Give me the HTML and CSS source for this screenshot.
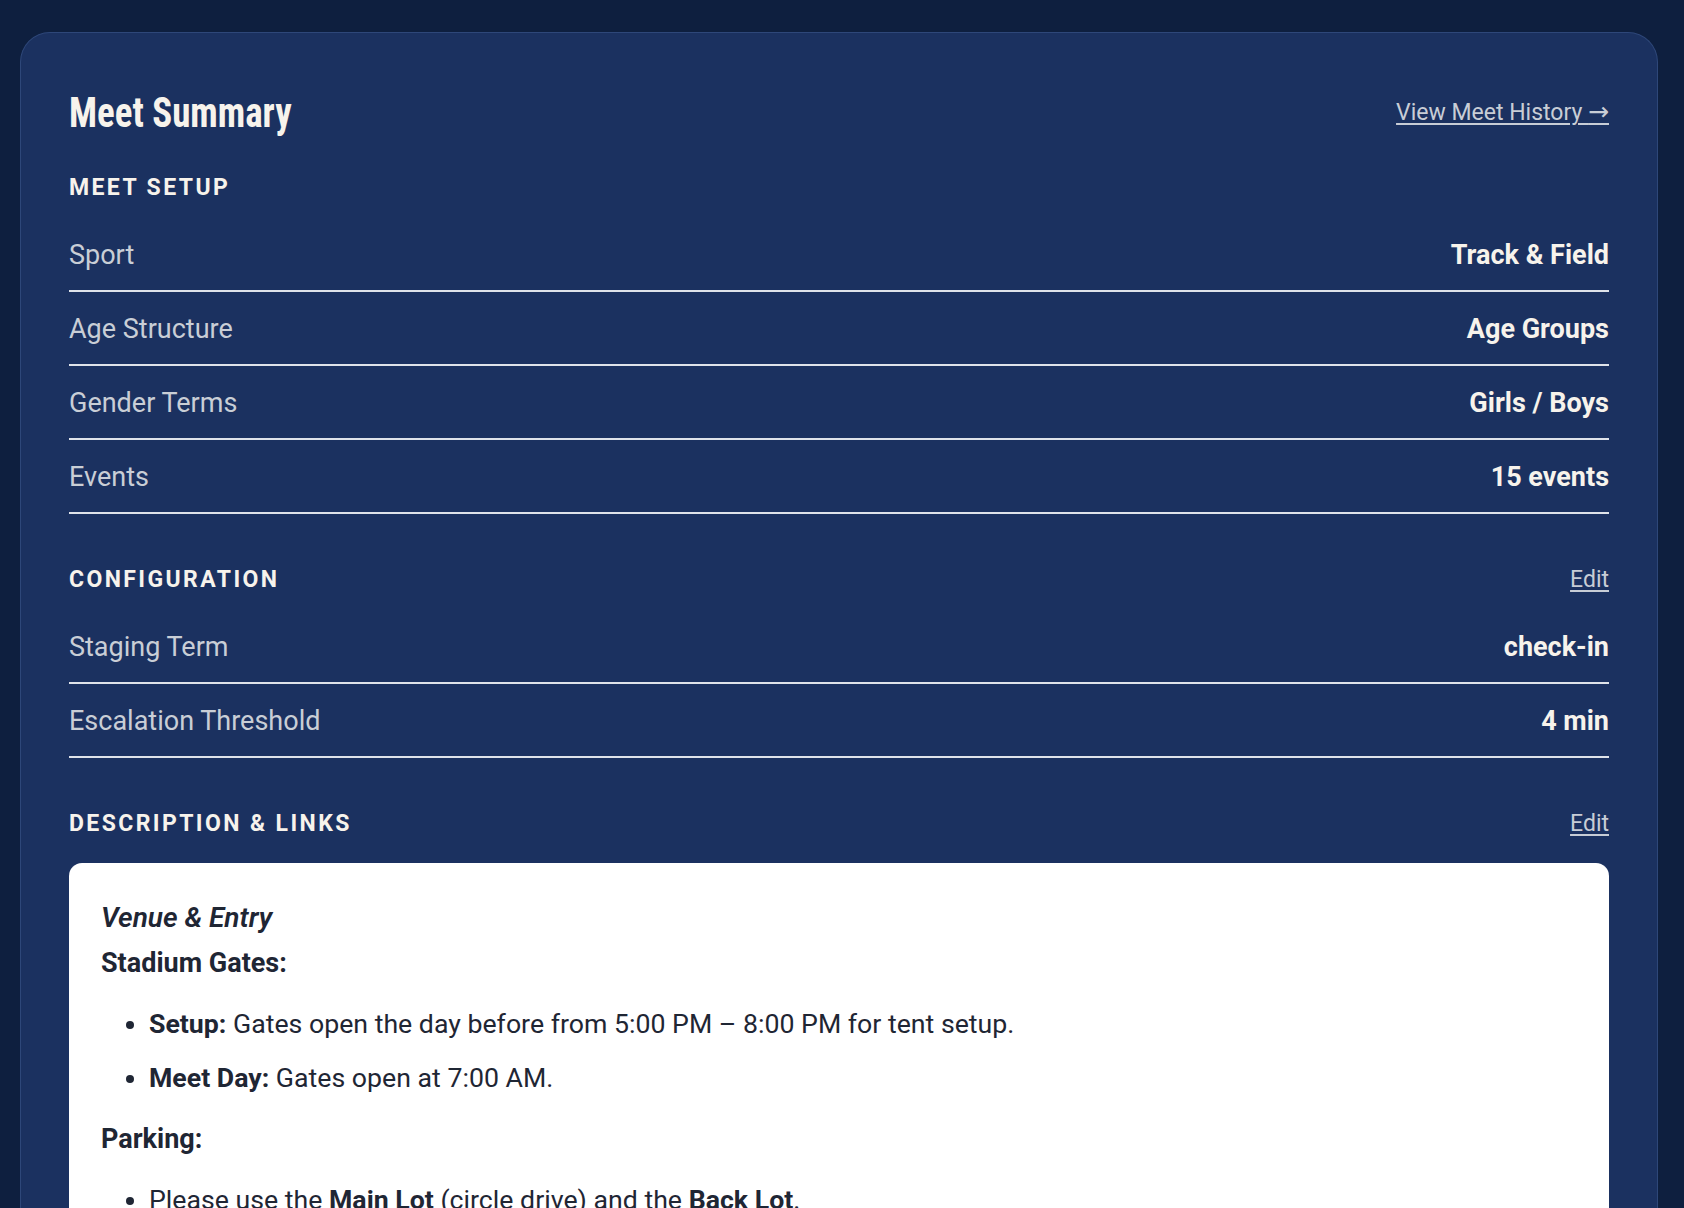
FILE: index.html
```html
<!DOCTYPE html>
<html lang="en">
<head>
<meta charset="utf-8">
<title>Meet Summary</title>
<link rel="stylesheet" href="styles.css">
</head>
<body>
<main class="card">
  <header class="card-header">
    <h1 class="title">Meet Summary</h1>
    <a class="link" href="#">View Meet History <span class="arrow">→</span></a>
  </header>

  <section class="section">
    <div class="section-head">
      <h2 class="section-title">MEET SETUP</h2>
    </div>
    <div class="row"><span class="label">Sport</span><span class="value">Track &amp; Field</span></div>
    <div class="row"><span class="label">Age Structure</span><span class="value">Age Groups</span></div>
    <div class="row"><span class="label">Gender Terms</span><span class="value">Girls / Boys</span></div>
    <div class="row"><span class="label">Events</span><span class="value">15 events</span></div>
  </section>

  <section class="section">
    <div class="section-head">
      <h2 class="section-title">CONFIGURATION</h2>
      <a class="link" href="#">Edit</a>
    </div>
    <div class="row"><span class="label">Staging Term</span><span class="value">check-in</span></div>
    <div class="row"><span class="label">Escalation Threshold</span><span class="value">4 min</span></div>
  </section>

  <section class="section">
    <div class="section-head">
      <h2 class="section-title">DESCRIPTION &amp; LINKS</h2>
      <a class="link" href="#">Edit</a>
    </div>
    <div class="desc">
      <p class="desc-heading">Venue &amp; Entry</p>
      <p class="desc-sub">Stadium Gates:</p>
      <ul class="desc-list">
        <li><strong>Setup:</strong> Gates open the day before from 5:00 PM – 8:00 PM for tent setup.</li>
        <li><strong>Meet Day:</strong> Gates open at 7:00 AM.</li>
      </ul>
      <p class="desc-sub">Parking:</p>
      <ul class="desc-list">
        <li>Please use the <strong>Main Lot</strong> (circle drive) and the <strong>Back Lot</strong>.</li>
      </ul>
    </div>
  </section>
</main>
</body>
</html>
```

FILE: styles.css
```css
* { box-sizing: border-box; }

html, body {
  margin: 0;
  padding: 0;
  height: 100%;
  overflow: hidden;
}

body {
  background: #0e1f3f;
  font-family: Roboto, "Liberation Sans", sans-serif;
  color: #f6f2eb;
}

.card {
  margin: 32px 26px 0 20px;
  min-height: 1300px;
  background: #1b3160;
  border: 1px solid #2e4779;
  border-bottom: none;
  border-radius: 30px 30px 0 0;
  padding: 0 48px;
}

.card-header {
  display: flex;
  justify-content: space-between;
  align-items: center;
  padding-top: 55px;
}

.title {
  margin: 0;
  font-family: "Roboto Condensed", Roboto, sans-serif;
  font-stretch: condensed;
  font-weight: 700;
  font-size: 42px;
  line-height: 50px;
  color: #f7f3ec;
  transform: scaleX(0.88);
  transform-origin: left center;
}

.link {
  font-size: 23px;
  line-height: 28px;
  color: #c8cdd6;
  text-decoration: underline;
  text-decoration-thickness: 2px;
  text-underline-offset: 3px;
}

.arrow {
  font-family: "DejaVu Sans", sans-serif;
  font-size: 25px;
  line-height: 20px;
}

.section {
  margin-top: 36px;
}

.section + .section {
  margin-top: 52px;
}

.section-head {
  display: flex;
  justify-content: space-between;
  align-items: baseline;
  margin-bottom: 16px;
}

.section-title {
  margin: 0;
  font-size: 23px;
  line-height: 28px;
  font-weight: 700;
  letter-spacing: 2.4px;
  color: #f7f3ec;
}

.row {
  display: flex;
  justify-content: space-between;
  align-items: baseline;
  padding: 21px 0 19px;
  border-bottom: 2px solid #dfe3ea;
  font-size: 27px;
  line-height: 32px;
}

.label {
  color: #c9ced6;
}

.value {
  font-weight: 700;
  color: #f7f3ec;
}

.desc {
  margin-top: 25px;
  background: #ffffff;
  border-radius: 13px 13px 0 0;
  padding: 35px 32px 40px;
  color: #1f2634;
  font-size: 26.7px;
  line-height: 40px;
}

.desc p {
  margin: 0;
}

.desc-heading {
  font-style: italic;
  font-weight: 600;
  font-size: 28px;
}

.desc-sub {
  font-weight: 700;
  font-size: 27px;
  margin-top: 5px !important;
}

.desc-list {
  margin: 21px 0;
  padding-left: 48px;
}

.desc-list li + li {
  margin-top: 14px;
}

.desc-list strong {
  font-weight: 700;
}
```
